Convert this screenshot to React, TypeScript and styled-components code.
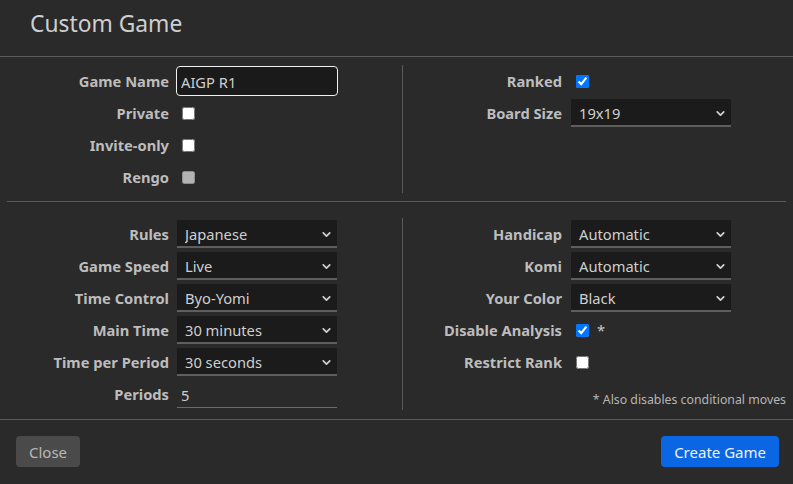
import React from "react";
import styled, { createGlobalStyle } from "styled-components";
import { ChevronDown } from "lucide-react";

const GlobalStyle = createGlobalStyle`
  html, body {
    margin: 0;
    padding: 0;
    background: #2a2a2a;
  }
  body {
    font-family: "Noto Sans", "DejaVu Sans", sans-serif;
    color: #c8c8c8;
  }
`;

const Dialog = styled.div`
  width: 793px;
  height: 484px;
  background: #2a2a2a;
  display: flex;
  flex-direction: column;
`;

const Header = styled.div`
  height: 57px;
  box-sizing: border-box;
  padding: 8px 30px 0;
  border-bottom: 1px solid #5a5a5a;
  font-size: 22.8px;
  color: #cfcfcf;
`;

const Body = styled.div`
  flex: 1;
  padding: 0 7px;
`;

const Section = styled.div<{ $pad: string }>`
  display: grid;
  grid-template-columns: 395px 1px 1fr;
  padding: ${(p) => p.$pad};
`;

const Divider = styled.div`
  background: #5a5a5a;
`;

const HRule = styled.div`
  height: 1px;
  background: #5a5a5a;
`;

const Half = styled.div<{ $label: number; $gap: number }>`
  display: grid;
  grid-template-columns: ${(p) => p.$label}px 1fr;
  grid-auto-rows: 32px;
  column-gap: ${(p) => p.$gap}px;
  align-items: center;
`;

const Label = styled.label`
  text-align: right;
  font-weight: 700;
  font-size: 14.7px;
  color: #bdbdbd;
  white-space: nowrap;
`;

const TextInput = styled.input`
  box-sizing: border-box;
  width: 162px;
  height: 30px;
  margin-left: -1px;
  background: #1a1a1a;
  border: 1px solid #f0f0f0;
  border-radius: 4px;
  color: #cfcfcf;
  font: 14.7px "Noto Sans", sans-serif;
  padding: 2px 4px 0;
  outline: none;
`;

const PlainInput = styled.input`
  box-sizing: border-box;
  width: 160px;
  height: 28px;
  background: transparent;
  border: none;
  border-bottom: 1px solid #6a6a6a;
  color: #cfcfcf;
  font: 14.7px "Noto Sans", sans-serif;
  padding: 2px 4px 0;
  outline: none;
`;

const CheckCell = styled.div`
  display: flex;
  align-items: center;
  gap: 8px;
  font-size: 14.7px;
  color: #c8c8c8;
`;

const Check = styled.input.attrs({ type: "checkbox" })`
  width: 13px;
  height: 13px;
  margin: 0 0 0 5px;
`;

const SelectWrap = styled.div`
  position: relative;
  width: 160px;
  height: 28px;
`;

const Select = styled.select`
  appearance: none;
  box-sizing: border-box;
  width: 160px;
  height: 28px;
  background: #1b1b1b;
  border: none;
  border-bottom: 2px solid #5e5e5e;
  color: #cfcfcf;
  font: 14.7px "Noto Sans", sans-serif;
  padding: 1px 8px 0;
  outline: none;
`;

const Chevron = styled(ChevronDown)`
  position: absolute;
  right: 4px;
  top: 8px;
  pointer-events: none;
  color: #d0d0d0;
`;

const Note = styled.div`
  grid-column: 1 / span 2;
  align-self: end;
  justify-self: end;
  padding-bottom: 2px;
  font-size: 12.3px;
  color: #b5b5b5;
`;

const Footer = styled.div`
  border-top: 1px solid #5a5a5a;
  height: 65px;
  box-sizing: border-box;
  padding: 16px 14px 0 16px;
  display: flex;
  justify-content: space-between;
  align-items: flex-start;
`;

const Button = styled.button<{ $primary?: boolean }>`
  height: 31px;
  padding: 0 13px;
  border: none;
  border-radius: 4px;
  font: 15px "Noto Sans", sans-serif;
  background: ${(p) => (p.$primary ? "#0b66e4" : "#4a4a4a")};
  color: ${(p) => (p.$primary ? "#f2f2f2" : "#b8b8b8")};
`;

function Dropdown({ value }: { value: string }) {
  return (
    <SelectWrap>
      <Select defaultValue={value}>
        <option>{value}</option>
      </Select>
      <Chevron size={13} strokeWidth={3.2} />
    </SelectWrap>
  );
}

export default function App() {
  return (
    <Dialog>
      <GlobalStyle />
      <Header>Custom Game</Header>
      <Body>
        <Section $pad="8px 0 8px">
          <Half $label={162} $gap={8}>
            <Label>Game Name</Label>
            <TextInput defaultValue="AIGP R1" spellCheck={false} />
            <Label>Private</Label>
            <CheckCell>
              <Check />
            </CheckCell>
            <Label>Invite-only</Label>
            <CheckCell>
              <Check />
            </CheckCell>
            <Label>Rengo</Label>
            <CheckCell>
              <Check disabled />
            </CheckCell>
          </Half>
          <Divider />
          <Half $label={159} $gap={9}>
            <Label>Ranked</Label>
            <CheckCell>
              <Check defaultChecked />
            </CheckCell>
            <Label>Board Size</Label>
            <Dropdown value="19x19" />
          </Half>
        </Section>
        <HRule />
        <Section $pad="16px 0 8px">
          <Half $label={162} $gap={8}>
            <Label>Rules</Label>
            <Dropdown value="Japanese" />
            <Label>Game Speed</Label>
            <Dropdown value="Live" />
            <Label>Time Control</Label>
            <Dropdown value="Byo-Yomi" />
            <Label>Main Time</Label>
            <Dropdown value="30 minutes" />
            <Label>Time per Period</Label>
            <Dropdown value="30 seconds" />
            <Label>Periods</Label>
            <PlainInput defaultValue="5" />
          </Half>
          <Divider />
          <Half $label={159} $gap={9}>
            <Label>Handicap</Label>
            <Dropdown value="Automatic" />
            <Label>Komi</Label>
            <Dropdown value="Automatic" />
            <Label>Your Color</Label>
            <Dropdown value="Black" />
            <Label>Disable Analysis</Label>
            <CheckCell>
              <Check defaultChecked />*
            </CheckCell>
            <Label>Restrict Rank</Label>
            <CheckCell>
              <Check />
            </CheckCell>
            <Note>* Also disables conditional moves</Note>
          </Half>
        </Section>
      </Body>
      <Footer>
        <Button>Close</Button>
        <Button $primary>Create Game</Button>
      </Footer>
    </Dialog>
  );
}
